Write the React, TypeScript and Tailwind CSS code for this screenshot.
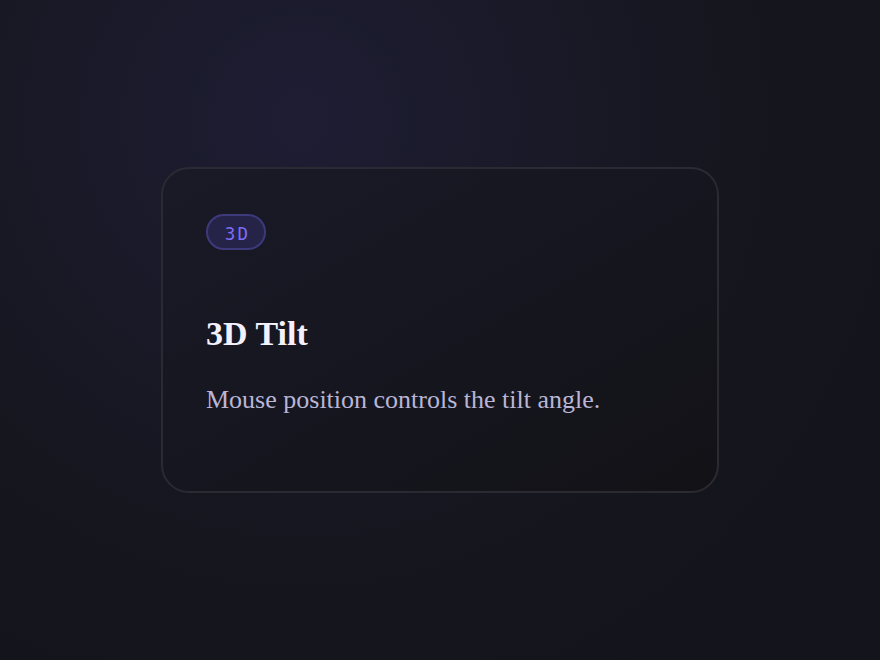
export default function App() {
  return (
    <div className="w-[880px] h-[660px] flex items-center justify-center bg-[radial-gradient(circle_at_300px_120px,#1e1d34_0%,#1a1a2a_25%,#16161f_55%,#14141c_80%,#14141c_100%)]">
      <div className="w-[558px] h-[326px] rounded-[28px] border-2 border-[#2b2a32] bg-[linear-gradient(150deg,#1a1a27_0%,#161620_50%,#121216_100%)] pl-[43px] pt-[45px] flex flex-col items-start">
        <div className="h-[36px] w-[60px] rounded-full border-2 border-[#3d3a7c] bg-[#252347] flex items-center justify-center text-[#7d6cf5] text-[17.5px] tracking-[0.13em] pt-[4px] pl-[3px] font-['DejaVu_Sans_Mono',monospace]">
          3D
        </div>
        <h1 className="mt-[64px] text-[34px] leading-[40px] font-bold text-[#f4f1ff] font-['Liberation_Serif',serif]">
          3D Tilt
        </h1>
        <p className="mt-[28px] text-[26px] leading-[36px] text-[#b9b5d6] font-['Liberation_Serif',serif]">
          Mouse position controls the tilt angle.
        </p>
      </div>
    </div>
  );
}
